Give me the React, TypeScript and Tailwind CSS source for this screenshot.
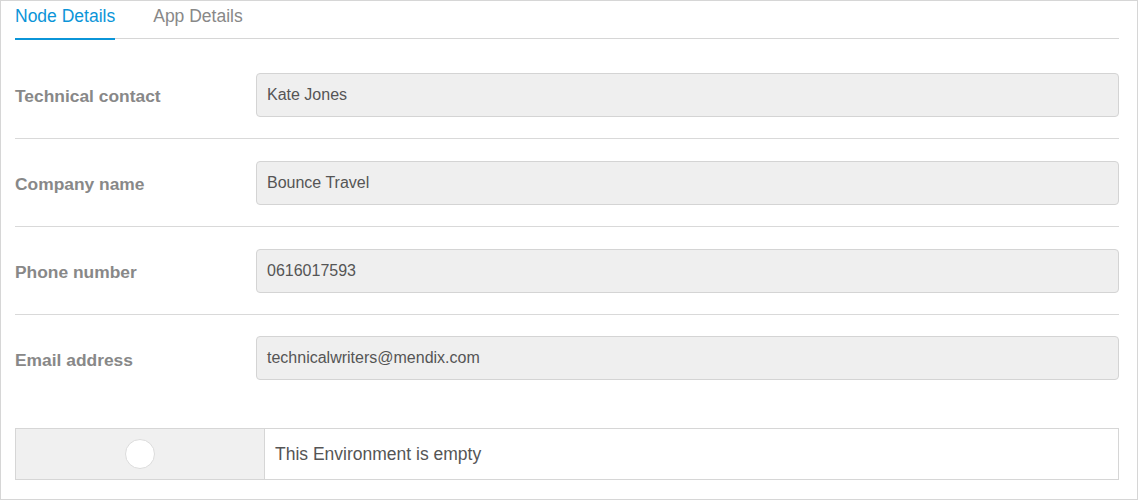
import { useState } from 'react';

const fields = [
  { label: 'Technical contact', value: 'Kate Jones' },
  { label: 'Company name', value: 'Bounce Travel' },
  { label: 'Phone number', value: '0616017593' },
  { label: 'Email address', value: 'technicalwriters@mendix.com' },
];

const App = () => {
  const [tab, setTab] = useState('node');

  return (
    <div className="w-[1138px] h-[500px] bg-white border border-[#d6d6d6] pl-[14px] pr-[18px] font-['Liberation_Sans',Arial,sans-serif] overflow-hidden">
      <div className="flex items-start h-[38px] border-b border-[#d6d6d6] gap-[38px]">
        <button
          onClick={() => setTab('node')}
          className={`h-[39px] flex items-start pt-[4px] text-[17.5px] leading-[22px] border-b-2 ${tab === 'node' ? 'text-[#0b95d8] border-[#0b95d8]' : 'text-[#888] border-transparent'}`}
        >
          Node Details
        </button>
        <button
          onClick={() => setTab('app')}
          className={`h-[39px] flex items-start pt-[4px] text-[17.5px] leading-[22px] border-b-2 ${tab === 'app' ? 'text-[#0b95d8] border-[#0b95d8]' : 'text-[#888] border-transparent'}`}
        >
          App Details
        </button>
      </div>

      <div className="mt-[12.67px]">
        {fields.map((f, i) => (
          <div
            key={f.label}
            className={`flex items-center py-[21.4px] ${i < fields.length - 1 ? 'border-b border-[#d9d9d9]' : ''}`}
          >
            <div className="w-[241px] shrink-0 pt-[3px] text-[17.4px] font-bold text-[#888]">{f.label}</div>
            <div className="flex-1 h-[44px] flex items-center px-[10px] bg-[#efefef] border border-[#d4d4d4] rounded-[4px] text-[16px] text-[#555]">
              {f.value}
            </div>
          </div>
        ))}
      </div>

      <div className="mt-[26px] flex h-[52px] border border-[#d6d6d6]">
        <div className="w-[249px] shrink-0 bg-[#f0f0f0] border-r border-[#d6d6d6] flex items-center justify-center">
          <div className="w-[30px] h-[30px] rounded-full bg-white border border-[#dcdcdc]" />
        </div>
        <div className="flex-1 flex items-center pl-[10px] text-[17.5px] text-[#555]">This Environment is empty</div>
      </div>
    </div>
  );
};

export default App;
